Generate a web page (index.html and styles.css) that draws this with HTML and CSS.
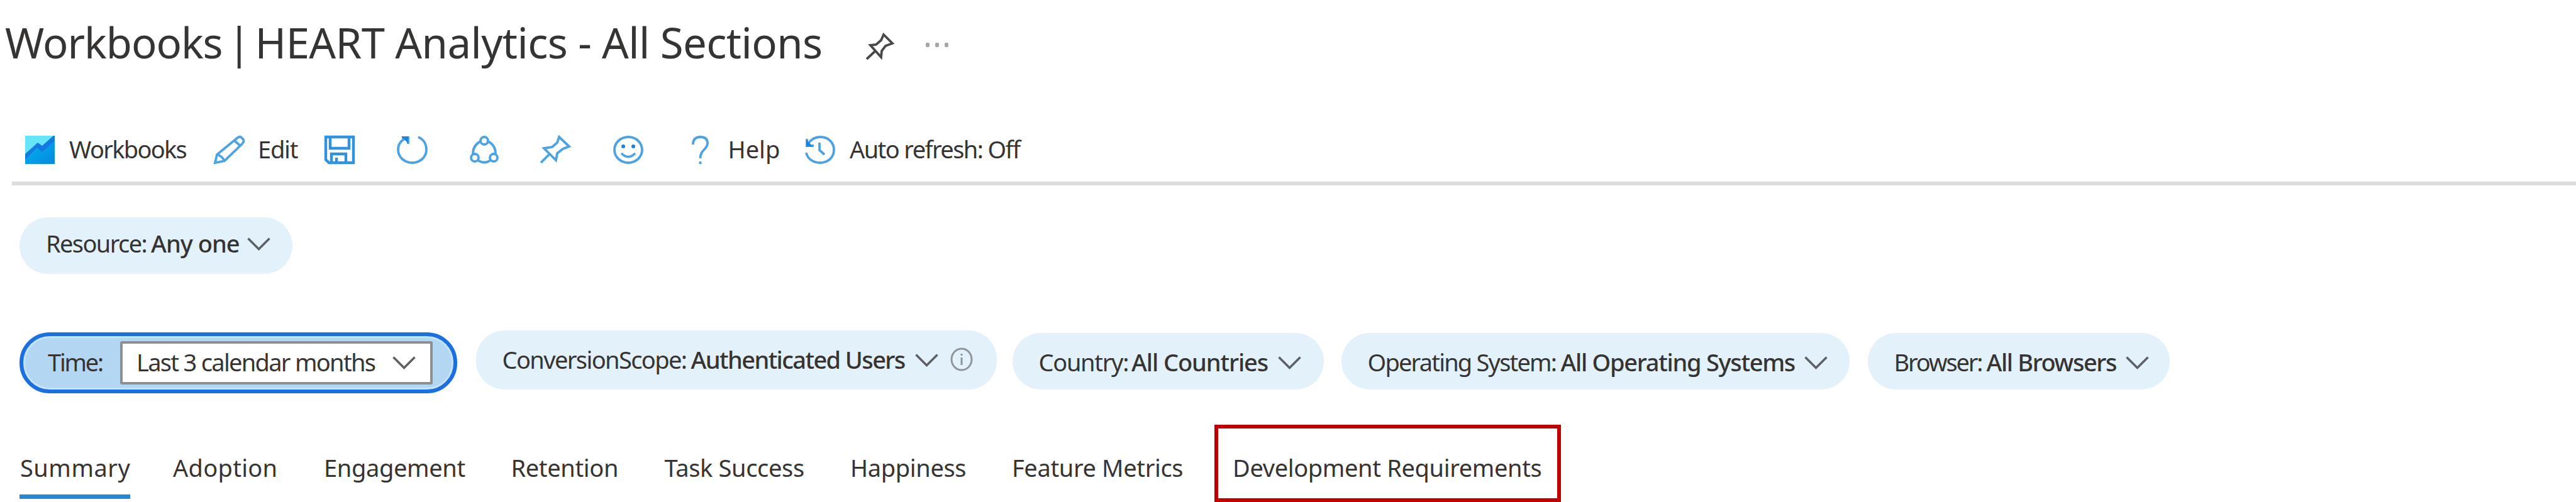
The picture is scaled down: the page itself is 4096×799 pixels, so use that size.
FILE: index.html
```html
<!DOCTYPE html>
<html lang="en">
<head>
<meta charset="utf-8">
<title>Workbooks | HEART Analytics - All Sections</title>
<link rel="stylesheet" href="styles.css">
</head>
<body>
<header class="title-bar">
  <h1 class="title"><span>Workbooks</span> <span>|</span> <span class="page-name">HEART Analytics - All Sections</span></h1>
  <svg class="title-pin" viewBox="0 0 44 42" preserveAspectRatio="none"><path d="M28 2 42 16 31 20 25 28 24 38 7 19 16 18 24 11ZM15 28 1 41"/></svg>
  <span class="dots"><i></i><i></i><i></i></span>
</header>

<nav class="toolbar">
  <svg class="icon" viewBox="0 0 47 45">
    <defs><linearGradient id="g" x1="0" y1="0" x2="1" y2="1"><stop offset="0" stop-color="#00b4ef"/><stop offset="1" stop-color="#0588e0"/></linearGradient></defs>
    <path fill="#66e5fa" d="M0 0h47v45H0z"/><path fill="#1479e0" d="M0 29 20 11 27 16 45 0H47V45H0Z"/><path fill="url(#g)" d="M0 38 19 19 27 26 47 8V45H0Z"/></svg>
  <span class="tool-label">Workbooks</span>
  <svg class="icon line" viewBox="0 0 49 45"><path d="M38 3Q42 0 45 4Q50 8 45 13L17 40 2 43 5 30ZM33 8 42 16M5 30Q13 32 17 40"/></svg>
  <span class="tool-label edit">Edit</span>
  <svg class="icon line save" viewBox="0 0 48 45"><path d="M2 2H46V43H7L2 38ZM9 3V20H39V3M11 43V29H34V43M19 43V35"/></svg>
  <svg class="icon line" viewBox="0 0 49 45"><path d="M34 2C43 6 47 14 47 22C47 34 37 43 24.500 43S2 34 2 22C2 14 6 8 14 4M18 13V3H8"/><path class="solid" d="M7 1H18V12Z"/></svg>
  <svg class="icon line" viewBox="0 0 46 45"><circle cx="23" cy="8" r="6"/><circle cx="8" cy="35" r="6"/><circle cx="38" cy="35" r="6"/><path d="M17 9C9 13 5 20 5 29M29 9C37 13 41 20 41 29M13 39Q23 46 33 39"/></svg>
  <svg class="icon line" viewBox="0 0 49 45"><path d="M31 2 47 17 37 21 28 28 26 39 7 20 20 18 28 11ZM16 29 2 43"/></svg>
  <svg class="icon line" viewBox="0 0 48 45"><ellipse cx="24" cy="22.500" rx="22" ry="20.500"/><path d="M13 28Q24 39 35 28"/><circle class="solid" cx="16" cy="17" r="3"/><circle class="solid" cx="32" cy="17" r="3"/></svg>
  <svg class="icon line" viewBox="0 0 27 45"><path d="M2 14V12Q3 2 13.500 2Q25 2 25 12C25 22 13.500 22 13.500 36M13.500 41V45"/></svg>
  <span class="tool-label help">Help</span>
  <svg class="icon line" viewBox="0 0 48 45"><path d="M5 13C10 5 17 2 24 2C37 2 46 11 46 22.500S37 43 24 43C13 43 4 37 2 27M3 5V16H14M23 11V23L31 30"/><path class="solid" d="M2 6V17H12Z"/></svg>
  <span class="tool-label auto">Auto refresh: Off</span>
</nav>

<main class="content">
  <div class="pills first">
    <div class="pill"><span class="name resource">Resource:</span><span class="value any">Any one</span><svg class="chevron" viewBox="0 0 37 21"><path d="M1.500 1.500 18.500 18.500 35.500 1.500"/></svg></div>
  </div>
  <div class="pills second">
    <div class="pill active"><span class="name time">Time:</span><span class="select"><span class="select-text">Last 3 calendar months</span><svg class="chevron" viewBox="0 0 37 21"><path d="M1.500 1.500 18.500 18.500 35.500 1.500"/></svg></span></div>
    <div class="pill scope"><span class="name">ConversionScope:</span><span class="value">Authenticated Users</span><svg class="chevron" viewBox="0 0 37 21"><path d="M1.500 1.500 18.500 18.500 35.500 1.500"/></svg><svg class="info" viewBox="0 0 38 40"><ellipse cx="19" cy="20" rx="16" ry="17"/><path d="M19 17V29M19 11V14"/></svg></div>
    <div class="pill country"><span class="name">Country:</span><span class="value">All Countries</span><svg class="chevron" viewBox="0 0 37 21"><path d="M1.500 1.500 18.500 18.500 35.500 1.500"/></svg></div>
    <div class="pill system"><span class="name">Operating System:</span><span class="value">All Operating Systems</span><svg class="chevron" viewBox="0 0 37 21"><path d="M1.500 1.500 18.500 18.500 35.500 1.500"/></svg></div>
    <div class="pill browser"><span class="name">Browser:</span><span class="value">All Browsers</span><svg class="chevron" viewBox="0 0 37 21"><path d="M1.500 1.500 18.500 18.500 35.500 1.500"/></svg></div>
  </div>
  <div class="tabs">
    <span class="tab selected">Summary</span>
    <span class="tab adoption">Adoption</span>
    <span class="tab">Engagement</span>
    <span class="tab">Retention</span>
    <span class="tab">Task Success</span>
    <span class="tab">Happiness</span>
    <span class="tab">Feature Metrics</span>
    <span class="tab boxed">Development Requirements</span>
  </div>
</main>
</body>
</html>
```
FILE: styles.css
```css
* { box-sizing: border-box; }

body {
  margin: 0;
  height: 799px;
  overflow: hidden;
  background: #fff;
  color: #353433;
  font: 38px/50px "Noto Sans", "Open Sans", sans-serif;
  white-space: nowrap;
}

svg { display: block; overflow: visible; fill: none; }

/* Title */
.title-bar {
  display: grid;
  grid-template-columns: 1369px 95px 40px;
  height: 216px;
  padding-left: 8px;
}
.title {
  display: flex;
  gap: 8px;
  margin: 0;
  padding-top: 22px;
  font-size: 67px;
  font-weight: 400;
  line-height: 90px;
  letter-spacing: -1.05px;
}
.page-name { letter-spacing: -0.55px; }
.title-pin {
  width: 44px;
  height: 42px;
  margin-top: 53px;
  stroke: #484848;
  stroke-width: 3.8;
}
.dots { display: flex; gap: 9px; padding-top: 68px; }
.dots i { width: 6px; height: 7px; border-radius: 2px; background: #a6a6a6; }

/* Toolbar */
.toolbar {
  display: grid;
  grid-template-columns: 70px 230px 70px 106px 115px 116px 111px 116.500px 125px 58px 122.500px 71px 300px;
  height: 79px;
  margin-left: 19px;
  padding-left: 21px;
  border-bottom: 6px solid #dcdcdc;
}
.toolbar .icon { height: 45px; width: auto; justify-self: start; }
.line { stroke: #4ba3e5; stroke-width: 3.8; }
.save { stroke: #2f93e0; stroke-width: 4.4; }
.solid { fill: #1c83dc; stroke: none; }
.tool-label { line-height: 43px; letter-spacing: -1.7px; }
.edit { letter-spacing: -1.2px; }
.help { letter-spacing: 0; }
.auto { letter-spacing: -1.6px; }

/* Filter pills */
.content { padding-left: 31px; }
.pills { display: grid; }
.pills.first { padding-top: 51px; grid-template-columns: 434px; }
.pills.second {
  grid-template-columns: 725.500px 853px 523px 837px 480px;
  align-items: end;
  height: 190px;
  align-content: end;
}
.pill {
  display: flex;
  align-items: flex-start;
  height: 90px;
  padding: 16px 0 0 42px;
  border-radius: 45px;
  background: #e3f1fb;
}
.pills.second .pill { margin-bottom: 6px; padding-top: 21px; }
.name { width: 167px; letter-spacing: -1.6px; }
.value { width: 153px; font-weight: 500; letter-spacing: -1.1px; }
.resource { letter-spacing: -1.6px; }
.any { letter-spacing: -1px; }
.chevron { width: 37px; height: 21px; margin-top: 16px; stroke: #5d6166; stroke-width: 3.6; }
.info { width: 38px; height: 40px; margin: 5px 0 0 18px; stroke: #909599; stroke-width: 3; }

.pills.second .active {
  width: 696px;
  height: 97px;
  margin-bottom: 0;
  padding: 8px 0 0 39px;
  border: 6px solid #1b6fe0;
  border-radius: 48px;
  background: #b3d6f2;
  box-shadow: inset 0 0 0 3px #c3e4fa;
}
.time { width: 115px; padding-top: 8px; letter-spacing: -2.2px; }
.select {
  display: flex;
  width: 497px;
  height: 69px;
  padding: 4px 0 0 22px;
  border: 4px solid #8e8e8e;
  border-radius: 3px;
  background: #fff;
}
.select-text { width: 407px; letter-spacing: -1.7px; }
.select .chevron { margin-top: 16px; }

.pills.second .scope { width: 828px; height: 94px; }
.scope .name { width: 300px; }
.scope .value { width: 356px; letter-spacing: -1.6px; }
.country { width: 495px; }
.country .name { width: 147.500px; letter-spacing: -1.3px; }
.country .value { width: 233px; }
.system { width: 808px; }
.system .name { width: 307px; letter-spacing: -1.8px; }
.system .value { width: 387px; letter-spacing: -1.3px; }
.browser .name { width: 147px; letter-spacing: -2.2px; }
.browser .value { width: 221px; letter-spacing: -1.4px; }

/* Tabs */
.tabs {
  display: grid;
  grid-template-columns: 242px 242px 297.500px 244px 295.500px 257px 322px 550.500px;
  margin-top: 50px;
  height: 123px;
}
.tab { padding-top: 43px; letter-spacing: -0.35px; }
.selected {
  width: 176px;
  height: 118px;
  padding-left: 1px;
  border-bottom: 7px solid #2488d8;
  letter-spacing: 0.5px;
}
.adoption { padding-left: 2px; letter-spacing: 0.3px; }
.boxed {
  height: 123px;
  padding: 37px 0 0 23px;
  border: 6px solid #c00000;
}
```
